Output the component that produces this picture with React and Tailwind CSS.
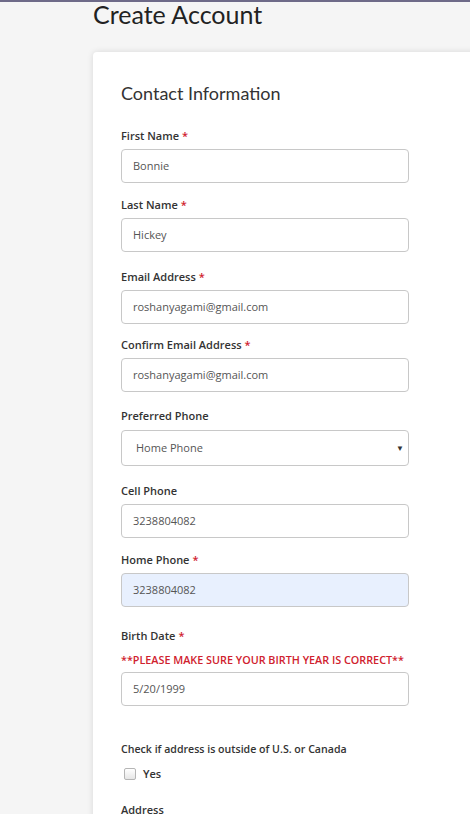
import React from "react";

const fields = [
  { label: "First Name", req: true, value: "Bonnie", mt: "mt-[24px]" },
  { label: "Last Name", req: true, value: "Hickey", mt: "mt-[14px]" },
  { label: "Email Address", req: true, value: "roshanyagami@gmail.com", mt: "mt-[17px]" },
  { label: "Confirm Email Address", req: true, value: "roshanyagami@gmail.com", mt: "mt-[13px]" },
];

function Label({ children, req }) {
  return (
    <div className="h-4 leading-4 text-[11px] font-semibold text-[#333]">
      {children}
      {req && <span className="text-[#d0212e] ml-[3px]">*</span>}
    </div>
  );
}

function Input({ value, filled }) {
  return (
    <div
      className={
        "mt-[5px] h-[34px] w-[288px] rounded-[4px] border border-[#c8c8c8] flex items-center pl-[11px] text-[11px] text-[#555] " +
        (filled ? "bg-[#e8f0fe]" : "bg-white")
      }
    >
      {value}
    </div>
  );
}

export default function App() {
  return (
    <div
      className="h-[814px] bg-[#f5f5f5] overflow-hidden"
      style={{ fontFamily: '"Open Sans", "Liberation Sans", sans-serif' }}
    >
      <div className="h-[2px] bg-[#6e6a88]" />
      <div className="pl-[93px]">
        <h1
          className="text-[25px] leading-[24px] text-[#222] h-[50px]"
          style={{ fontFamily: "Lato, sans-serif" }}
        >
          Create Account
        </h1>
        <div className="bg-white rounded-[4px] shadow-[0_0_6px_rgba(0,0,0,0.12)] w-[420px] pl-[28px] pt-[30px] pb-[40px]">
          <h2
            className="text-[18px] leading-[22px] text-[#333]"
            style={{ fontFamily: "Lato, sans-serif" }}
          >
            Contact Information
          </h2>
          {fields.map((f) => (
            <div key={f.label} className={f.mt}>
              <Label req={f.req}>{f.label}</Label>
              <Input value={f.value} />
            </div>
          ))}
          <div className="mt-[16px]">
            <Label>Preferred Phone</Label>
            <div className="mt-[6px] h-[36px] w-[288px] rounded-[4px] border border-[#c8c8c8] bg-white flex items-center justify-between pl-[14px] pr-[4px] text-[11px] text-[#555]">
              <span>Home Phone</span>
              <span className="text-[8px] text-[#333]">▼</span>
            </div>
          </div>
          <div className="mt-[17px]">
            <Label>Cell Phone</Label>
            <Input value="3238804082" />
          </div>
          <div className="mt-[14px]">
            <Label req>Home Phone</Label>
            <Input value="3238804082" filled />
          </div>
          <div className="mt-[21px]">
            <Label req>Birth Date</Label>
            <div className="mt-[8px] h-4 leading-4 text-[10.8px] font-semibold text-[#d0212e]">
              **PLEASE MAKE SURE YOUR BIRTH YEAR IS CORRECT**
            </div>
            <div className="-mt-[1px]">
              <Input value="5/20/1999" />
            </div>
          </div>
          <div className="mt-[35px]">
            <div className="h-4 leading-4 text-[10.6px] font-semibold text-[#333]">
              Check if address is outside of U.S. or Canada
            </div>
            <div className="mt-[9px] flex items-center h-4">
              <span className="ml-[3px] w-[12px] h-[12px] rounded-[2px] border border-[#b5b5b5] bg-gradient-to-b from-white to-[#e6e6e6]" />
              <span className="ml-[7px] text-[11px] font-semibold text-[#333]">Yes</span>
            </div>
          </div>
          <div className="mt-[20px]">
            <Label>Address</Label>
          </div>
        </div>
      </div>
    </div>
  );
}
